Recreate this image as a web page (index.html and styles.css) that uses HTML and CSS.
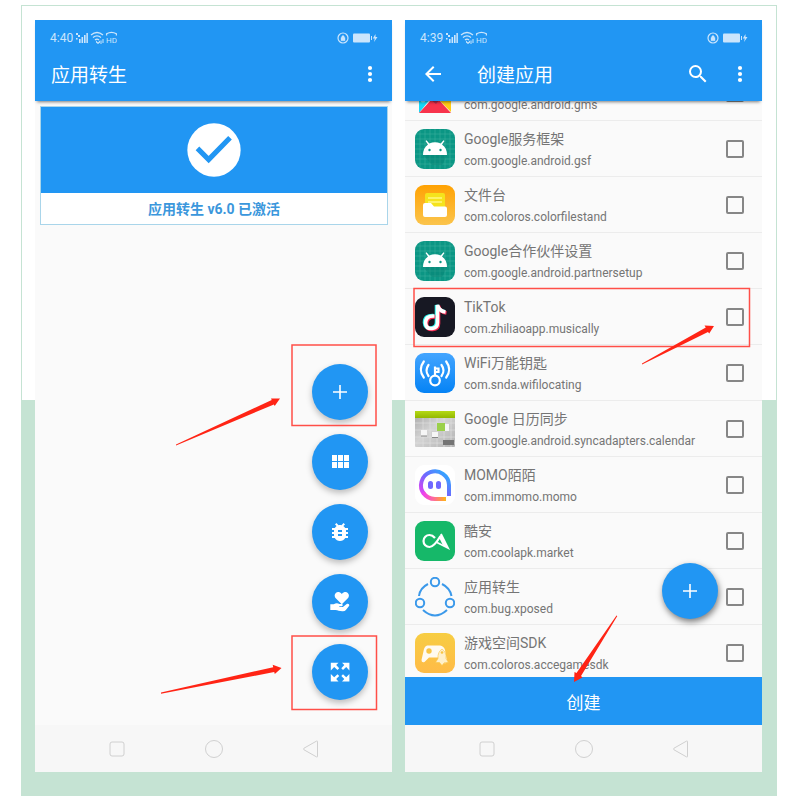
FILE: index.html
```html
<!DOCTYPE html>
<html lang="zh-CN">
<head>
<meta charset="utf-8">
<meta name="viewport" content="width=device-width, initial-scale=1">
<title>应用转生</title>
<link rel="stylesheet" href="styles.css">
</head>
<body>
<svg class="defs" aria-hidden="true">
  <defs>
    <linearGradient id="g-orange" x1="0" y1="0" x2="0" y2="1"><stop offset="0" stop-color="#ffa203"/><stop offset="1" stop-color="#fbc44c"/></linearGradient>
    <linearGradient id="g-blue" x1="0" y1="0" x2="0" y2="1"><stop offset="0" stop-color="#43a5ff"/><stop offset="1" stop-color="#0583f5"/></linearGradient>
    <linearGradient id="g-yellow" x1="0" y1="0" x2="0" y2="1"><stop offset="0" stop-color="#f7cd42"/><stop offset="1" stop-color="#ffbb47"/></linearGradient>
    <linearGradient id="g-lime" x1="0" y1="0" x2="0" y2="1"><stop offset="0" stop-color="#b5d916"/><stop offset="1" stop-color="#93b800"/></linearGradient>
    <linearGradient id="g-grey" x1="0" y1="0" x2="1" y2="1"><stop offset="0" stop-color="#a9a9a9"/><stop offset=".45" stop-color="#d4d4d4"/><stop offset="1" stop-color="#b2b2b2"/></linearGradient>
    <linearGradient id="g-momo1" x1="0" y1="1" x2="1" y2="0"><stop offset="0" stop-color="#f03ff0"/><stop offset=".5" stop-color="#6f68ff"/><stop offset="1" stop-color="#23b6ff"/></linearGradient>
    <linearGradient id="g-momo2" x1="0" y1="0" x2="1" y2="0"><stop offset="0" stop-color="#f03ff0"/><stop offset=".5" stop-color="#ff6f8f"/><stop offset="1" stop-color="#ffb714"/></linearGradient>
  </defs>
  <symbol id="network" viewBox="0 0 42 14">
    <g fill="currentColor">
      <path d="M1 2h2v2H1zM3 4h2v2H3zM1 7h1.600v1.500H1zM4 8h1.600v4H4zM6.500 6h1.600v6H6.500zM9 4h1.600v8H9zM11.400 2h1.500v10h-1.500z"/>
      <path d="M21 9.500l2 2 2-2v2l-2 1.500-2-1.500zM25.500 9.500h1v3.500h-1zM27.500 8h1v4h-1z"/>
    </g>
    <g fill="none" stroke="currentColor" stroke-width="1.300">
      <path d="M16 4q6-5 12 0M18 6.500q4-3.300 8 0M20 9q2-1.600 4 0"/>
      <path d="M31.600 4.500V2.800q4.900-3 9.800 0V4.500"/>
    </g>
    <text x="31" y="12" font-size="8" font-family="Roboto, sans-serif" fill="currentColor">HD</text>
  </symbol>
  <symbol id="power" viewBox="0 0 42 14">
    <circle cx="7" cy="7" r="5" fill="none" stroke="currentColor" stroke-width="1.200"/>
    <path d="M5 6.500h4v3.200H5zM5.800 6.500V5.200q1.200-1.600 2.400 0v1.300" fill="currentColor" stroke="currentColor" stroke-width=".4"/>
    <rect x="17" y="2.500" width="17" height="9" rx="1" fill="currentColor"/>
    <path d="M35 5h1v4h-1zM39.500 3l-2.700 4.500h2L38 11l3.500-5h-2z" fill="currentColor"/>
  </symbol>
  <symbol id="more" viewBox="0 0 24 24"><circle cx="12" cy="6" r="2.100"/><circle cx="12" cy="12" r="2.100"/><circle cx="12" cy="18" r="2.100"/></symbol>
  <symbol id="add" viewBox="0 0 24 24"><path d="M19 12.800h-6.200V19h-1.600v-6.200H5v-1.600h6.200V5h1.600v6.200H19z"/></symbol>
  <symbol id="nav-recent" viewBox="0 0 18 18"><rect x="2" y="2" width="14" height="14" rx="2"/></symbol>
  <symbol id="nav-home" viewBox="0 0 18 18"><circle cx="9" cy="9" r="8.500"/></symbol>
  <symbol id="nav-back" viewBox="0 0 18 18"><path d="M15.500 1.500v15q0 .8-1 .4L2 9.800q-1.200-.8 0-1.600L14.500 1.100q1-.4 1 .4z"/></symbol>
  <symbol id="android" viewBox="0 0 40 40">
    <rect width="40" height="40" rx="9" fill="#0b9684"/>
    <path d="M5 1v38M10 0v40M15 0v40M20 0v40M25 0v40M30 0v40M35 1v38M1 5h38M0 10h40M0 15h40M0 20h40M0 25h40M0 30h40M1 35h38" stroke="#43b0a2" stroke-width=".5"/>
    <path d="M8 26l9 10h10l5-10z" fill="#067b6c" opacity=".35"/>
    <path d="M8 26q0-7 5-10.500l-2.500-3.500 1-.8 2.800 3.400Q20 12 25.700 14.600l2.800-3.400 1 .8-2.500 3.500q5 3.500 5 10.500z" fill="#fff"/>
    <circle cx="14.500" cy="21" r="1.200" fill="#0b9684"/><circle cx="25.500" cy="21" r="1.200" fill="#0b9684"/>
  </symbol>
</svg>

<main class="frame">
  <section class="phone">
    <header class="top">
      <div class="status"><span>4:40</span><svg class="status-icon"><use href="#network"/></svg><svg class="status-icon push"><use href="#power"/></svg></div>
      <div class="toolbar">
        <h1>应用转生</h1>
        <button class="icon-button push" aria-label="更多"><svg><use href="#more"/></svg></button>
      </div>
    </header>
    <div class="home">
      <div class="card">
        <div class="card-hero"><svg viewBox="0 0 24 24"><circle cx="12" cy="12" r="10" fill="#fff"/><path d="M5.800 11.400l4.200 4.200 8-8.200" fill="none" stroke="#2196f3" stroke-width="1.900"/></svg></div>
        <p>应用转生 v6.0 已激活</p>
      </div>
      <div class="actions">
        <button class="fab" aria-label="添加"><svg><use href="#add"/></svg></button>
        <button class="fab" aria-label="模块"><svg viewBox="0 0 24 24"><path d="M4 11h5V5H4v6zm0 7h5v-6H4v6zm6 0h5v-6h-5v6zm6 0h5v-6h-5v6zm-6-7h5V5h-5v6zm6-6v6h5V5h-5z"/></svg></button>
        <button class="fab" aria-label="调试"><svg viewBox="0 0 24 24"><path d="M20 8h-2.810c-.45-.78-1.070-1.450-1.820-1.960L17 4.410 15.590 3l-2.170 2.170C12.960 5.060 12.490 5 12 5c-.49 0-.96.06-1.410.17L8.410 3 7 4.410l1.620 1.630C7.880 6.550 7.260 7.220 6.810 8H4v2h2.090c-.05.33-.09.66-.09 1v1H4v2h2v1c0 .34.04.67.09 1H4v2h2.810c1.040 1.790 2.970 3 5.190 3s4.150-1.210 5.190-3H20v-2h-2.090c.05-.33.09-.66.09-1v-1h2v-2h-2v-1c0-.34-.04-.67-.09-1H20V8zm-6 8h-4v-2h4v2zm0-4h-4v-2h4v2z"/></svg></button>
        <button class="fab" aria-label="支持"><svg viewBox="0 0 24 24"><path d="M13.800 14.300L8 8.600C6.200 6.600 6.300 4.200 7.800 2.900c1.600-1.400 4.200-1 6 1 1.800-2 4.400-2.400 6-1 1.500 1.300 1.600 3.700-.2 5.700z"/><path d="M2.300 14.200h3.400c2.300-1.500 4.100-1.300 5.700-.2h2.200c1.500 0 1.600 2 .2 2.200h-2.500v.7h3.600l3.800-3c1.500-.8 2.900.3 2.500 1.800l-3.300 4.200q-1 1.300-3 1.300c-3.400.2-5-1.300-7.400-1.300H2.300z"/></svg></button>
        <button class="fab" aria-label="展开"><svg viewBox="0 0 24 24"><path d="M2.800 2.800h7.700L8.200 5.100l3 3.200-1.700 1.700-3.300-3-3.400 3.500zM21.400 2.800H14l2.300 2.300-3 3.200L15 10l3.200-3 3.200 3.500zM2.800 21.400h7.700l-2.300-2.300 3-3.100-1.700-1.700-3.300 3L2.800 14zM21.400 21.400H14l2.300-2.300-3-3.100 1.700-1.700 3.200 3 3.200-3.300z"/></svg></button>
      </div>
    </div>
    <nav class="nav"><svg><use href="#nav-recent"/></svg><svg><use href="#nav-home"/></svg><svg><use href="#nav-back"/></svg></nav>
    <svg class="marks" viewBox="0 0 357 752" preserveAspectRatio="none" aria-hidden="true">
      <rect x="257" y="325" width="84" height="80.500"/><rect x="257" y="616" width="84.500" height="73.500"/>
      <path d="M141 424.500L236.700 380 236 378.500H245L239.700 386 238.900 384.400 141 425.500zM126 672.600L238.200 647.200 237.700 644.800 246.500 648 239.800 654 239.200 652 126 673.800z"/>
    </svg>
  </section>

  <section class="phone">
    <header class="top">
      <div class="status"><span>4:39</span><svg class="status-icon"><use href="#network"/></svg><svg class="status-icon push"><use href="#power"/></svg></div>
      <div class="toolbar">
        <button class="icon-button back" aria-label="返回"><svg viewBox="0 0 24 24"><path d="M20 11H7.830l5.590-5.590L12 4l-8 8 8 8 1.410-1.410L7.830 13H20v-2z"/></svg></button>
        <h1>创建应用</h1>
        <button class="icon-button push" aria-label="搜索"><svg viewBox="0 0 24 24"><path d="M15.500 14h-.79l-.28-.27A6.470 6.470 0 0 0 16 9.500 6.500 6.500 0 1 0 9.500 16c1.610 0 3.090-.59 4.230-1.570l.27.28v.79l5 4.990L20.490 19l-4.990-5zm-6 0a4.500 4.500 0 1 1 0-9 4.500 4.500 0 0 1 0 9z"/></svg></button>
        <button class="icon-button" aria-label="更多"><svg><use href="#more"/></svg></button>
      </div>
    </header>
    <div class="viewport">
      <ul class="apps">
        <li><label>
          <svg class="app-icon" viewBox="0 0 40 40"><path d="M4 4h16v16L4 40z" fill="#16d8f7"/><path d="M36 8L22 25l14 14z" fill="#ffcb16"/><path d="M4 40l13-14h6l13 14z" fill="#f7334c"/><path d="M16 27l5 4 4-5-3-3z" fill="#b4294e"/><circle cx="8" cy="27" r="2.500" fill="#8ceaff"/></svg>
          <span class="names"><b>&nbsp;</b><small>com.google.android.gms</small></span><input type="checkbox"></label></li>
        <li><label><svg class="app-icon"><use href="#android"/></svg>
          <span class="names"><b>Google服务框架</b><small>com.google.android.gsf</small></span><input type="checkbox"></label></li>
        <li><label>
          <svg class="app-icon" viewBox="0 0 40 40"><rect width="40" height="40" rx="9" fill="url(#g-orange)"/><rect x="10" y="8" width="20" height="16" rx="2" fill="#f5e31c"/><path d="M13 13h14M13 17h14" stroke="#fff780" stroke-width="1.300"/><path d="M10 18h6l3 3.500h11q2 0 2 2V30q0 2-2 2H10q-2 0-2-2V20q0-2 2-2z" fill="#fff"/></svg>
          <span class="names"><b>文件台</b><small>com.coloros.colorfilestand</small></span><input type="checkbox"></label></li>
        <li><label><svg class="app-icon"><use href="#android"/></svg>
          <span class="names"><b>Google合作伙伴设置</b><small>com.google.android.partnersetup</small></span><input type="checkbox"></label></li>
        <li><label>
          <svg class="app-icon" viewBox="0 0 40 40"><rect width="40" height="40" rx="9" fill="#171823"/><g fill="none" stroke-width="3.600"><path d="M18.500 18.500q-9-.5-9 7 .5 6 6.500 5.500 5.500-.5 5.500-6V8q1.500 6 8 6.500" stroke="#25f4ee"/><path d="M20.500 20q-9-.5-9 7 .5 6 6.500 5.500 5.500-.5 5.500-6V9q1.500 6 8 7" stroke="#fe2c55"/><path d="M19.500 19q-9-.5-9 7 .5 6 6.500 5.500 5.500-.5 5.500-6V8q1.500 6 8 7" stroke="#fff"/></g></svg>
          <span class="names"><b>TikTok</b><small>com.zhiliaoapp.musically</small></span><input type="checkbox"></label></li>
        <li><label>
          <svg class="app-icon" viewBox="0 0 40 40"><rect width="40" height="40" rx="9" fill="url(#g-blue)"/><g fill="none" stroke="#fff" stroke-width="2.200"><circle cx="20" cy="27.500" r="4.800"/><path d="M20 23V13.500M20 15.500h3.500v3.500H20"/><path d="M13.500 12q-4 5.500 0 11M8.800 8.500q-6 8 0 16M26.500 12q4 5.500 0 11M31.200 8.500q6 8 0 16" stroke-linecap="round"/></g></svg>
          <span class="names"><b>WiFi万能钥匙</b><small>com.snda.wifilocating</small></span><input type="checkbox"></label></li>
        <li><label>
          <svg class="app-icon" viewBox="0 0 40 40"><rect y="3" width="40" height="35" rx="1" fill="url(#g-grey)"/><rect y="2" width="40" height="7" fill="url(#g-lime)"/><path d="M8 9v29M15 9v29M22 9v29M29 9v29M36 9v29M0 14h40M0 21h40M0 28h40M0 34h40" stroke="#e2e2e2" stroke-width=".6"/><path d="M6 21h6v6H6zM17 23h6v5h-6zM30 15h4v7h-4z" fill="#f6f6f6"/><path d="M6 27h6M17 28.500h6" stroke="#888"/><rect x="22" y="14" width="8" height="8" fill="#9bd04a"/><rect x="28" y="31" width="11" height="5" fill="#747474"/></svg>
          <span class="names"><b>Google 日历同步</b><small>com.google.android.syncadapters.calendar</small></span><input type="checkbox"></label></li>
        <li><label>
          <svg class="app-icon" viewBox="0 0 40 40"><rect width="40" height="40" rx="9" fill="#fff"/><g fill="none" stroke-width="4"><path d="M9 29A14 14 0 1 1 34 20V31" stroke="url(#g-momo1)"/><path d="M8 27.500Q12.500 34 20 34H31" stroke="url(#g-momo2)"/></g><rect x="13" y="16" width="5" height="8" rx="2.500" fill="#7067ff"/><rect x="21" y="16" width="5" height="8" rx="2.500" fill="#7067ff"/></svg>
          <span class="names"><b>MOMO陌陌</b><small>com.immomo.momo</small></span><input type="checkbox"></label></li>
        <li><label>
          <svg class="app-icon" viewBox="0 0 40 40"><rect width="40" height="40" rx="9" fill="#16b869"/><path d="M25.500 15Q19 26 14.500 26A6 6 0 1 1 14.500 14Q17.500 14 20 17" fill="none" stroke="#fff" stroke-width="2.200"/><path d="M26 13l7 14-11-5.500" fill="none" stroke="#fff" stroke-width="1.800"/><path d="M26 13l7 14-5-2.500-4-8z" fill="#fff"/></svg>
          <span class="names"><b>酷安</b><small>com.coolapk.market</small></span><input type="checkbox"></label></li>
        <li><label>
          <svg class="app-icon" viewBox="0 0 40 40"><g fill="none" stroke="#3b99ea" stroke-width="2"><circle cx="20" cy="5" r="4.200"/><circle cx="5" cy="26" r="4.200"/><circle cx="35" cy="26" r="4.200"/><path d="M13 7Q5 11 4 19M27 7q8 4 9.500 12M8 33q12 11 24 0"/></g></svg>
          <span class="names"><b>应用转生</b><small>com.bug.xposed</small></span><input type="checkbox"></label></li>
        <li><label>
          <svg class="app-icon" viewBox="0 0 40 40"><rect width="40" height="40" rx="9" fill="url(#g-yellow)"/><path d="M12 12.500h13q4 .5 5 4.500l2 11q0 3-3 2l-5-5.500H14L9.500 29q-3 1-3-2L9 16q.8-3 3-3.500z" fill="#fffaf0"/><circle cx="14" cy="18" r="2.700" fill="#f8c544"/><path d="M27 16q4.500 3 4 9.500l2.500 4h-4L27 32.500l-2.500-3h-4l2.500-4q-.5-6.500 4-9.500z" fill="#fff0cb" stroke="#f8c544" stroke-width=".6"/><circle cx="27" cy="19.500" r="1.300" fill="#f8c544"/></svg>
          <span class="names"><b>游戏空间SDK</b><small>com.coloros.accegamesdk</small></span><input type="checkbox"></label></li>
      </ul>
      <button class="fab fab-floating" aria-label="添加"><svg><use href="#add"/></svg></button>
    </div>
    <button class="create">创建</button>
    <nav class="nav"><svg><use href="#nav-recent"/></svg><svg><use href="#nav-home"/></svg><svg><use href="#nav-back"/></svg></nav>
    <svg class="marks" viewBox="0 0 357 752" preserveAspectRatio="none" aria-hidden="true">
      <rect x="9" y="268.500" width="335.500" height="58"/>
      <path d="M237 343.500L300.800 307.500 299.500 305.500 309 306 304.200 313.500 303 312 237 344.500zM211.500 595.500L171.500 653 169.500 652 169 662 177.500 657.500 176 656 212.300 596z"/>
    </svg>
  </section>
</main>
</body>
</html>
```
FILE: styles.css
```css
* {
  box-sizing: border-box;
}

body {
  display: flex;
  height: 100vh;
  margin: 0;
  padding: 5px 23px 4px 21px;
  background: #fff;
  font-family: Roboto, "Noto Sans CJK SC", sans-serif;
  color: #757575;
}

button {
  padding: 0;
  border: 0;
  font: inherit;
  color: inherit;
}

svg {
  display: block;
  flex: none;
}

.defs {
  position: absolute;
  width: 0;
  height: 0;
}

.frame {
  flex: 1;
  display: grid;
  grid-template-columns: 1fr 1fr;
  grid-template-rows: minmax(0, 1fr);
  gap: 13px;
  padding: 14px 14px 23px 13px;
  border: 1px solid #c5e3d3;
  background: linear-gradient(#fff 50%, #c5e3d3 50%);
}

.phone {
  position: relative;
  display: flex;
  flex-direction: column;
  min-width: 0;
  background: #fafafa;
}

.top {
  position: relative;
  z-index: 1;
  background: #2196f3;
  color: #fff;
  box-shadow: 0 3px 3px -2px rgba(0, 0, 0, 0.5);
}

.status {
  display: flex;
  align-items: center;
  gap: 2px;
  height: 26px;
  padding: 10px 14px 0 15px;
  font-size: 12px;
  line-height: 16px;
  color: #cbe5fc;
}

.status-icon {
  width: 42px;
  height: 14px;
}

.push {
  margin-left: auto;
}

.toolbar {
  display: flex;
  align-items: center;
  gap: 18px;
  height: 55px;
  padding: 0 10px 0 16px;
}

.toolbar h1 {
  margin: 0;
  padding-top: 4px;
  font-size: 19px;
  line-height: 28px;
  font-weight: 400;
}

.icon-button {
  background: none;
}

.icon-button svg,
.fab svg {
  width: 24px;
  height: 24px;
  fill: currentColor;
}

.back {
  margin-right: 14px;
}

.home {
  flex: 1;
  display: flex;
  flex-direction: column;
  justify-content: space-between;
  padding: 5px 4px 25px 5px;
}

.card {
  border: 1px solid #a9d5ea;
  background: #fff;
}

.card-hero {
  display: flex;
  justify-content: center;
  padding: 11px 0;
  background: #2196f3;
}

.card-hero svg {
  width: 64px;
  height: 64px;
}

.card p {
  margin: 0;
  padding-top: 1px;
  font-size: 14px;
  line-height: 30px;
  font-weight: 700;
  text-align: center;
  color: #3b97dc;
}

.actions {
  display: flex;
  flex-direction: column;
  align-items: flex-end;
  gap: 14px;
  padding-right: 20px;
}

.fab {
  display: flex;
  align-items: center;
  justify-content: center;
  width: 56px;
  height: 56px;
  border-radius: 50%;
  background: #2196f3;
  color: #fff;
  box-shadow: 0 3px 6px rgba(0, 0, 0, 0.25);
}

.fab-floating {
  position: absolute;
  right: 44px;
  bottom: 58px;
  box-shadow: 1px 3px 6px rgba(0, 0, 0, 0.5);
}

.viewport {
  position: relative;
  flex: 1;
  min-height: 0;
  overflow: hidden;
}

.apps {
  margin: -36px 0 0;
  padding: 0;
  list-style: none;
}

.apps label {
  display: flex;
  align-items: center;
  height: 56px;
  padding: 0 18px 0 10px;
  border-bottom: 1px solid #ececec;
}

.app-icon {
  width: 40px;
  height: 40px;
}

.names {
  flex: 1;
  margin-left: 9px;
  padding-top: 3px;
}

.names b,
.names small {
  display: block;
  font-size: 14px;
  line-height: 22px;
  font-weight: 400;
}

.names small {
  font-size: 12px;
}

.apps input {
  appearance: none;
  width: 18px;
  height: 18px;
  margin: 0;
  border: 2px solid #868686;
  border-radius: 2px;
}

.create {
  height: 48px;
  background: #2196f3;
  font-size: 17px;
  color: #fff;
}

.nav {
  display: flex;
  align-items: center;
  justify-content: center;
  gap: 79px;
  height: 47px;
  background: #f7f7f7;
}

.nav svg {
  width: 18px;
  height: 18px;
  fill: none;
  stroke: #d0d0d0;
  overflow: visible;
}

.marks {
  position: absolute;
  z-index: 2;
  inset: 0;
  width: 100%;
  height: 100%;
  pointer-events: none;
}

.marks rect {
  fill: none;
  stroke: #ff4f48;
  stroke-width: 1.5;
}

.marks path {
  fill: #ff2415;
}
```
